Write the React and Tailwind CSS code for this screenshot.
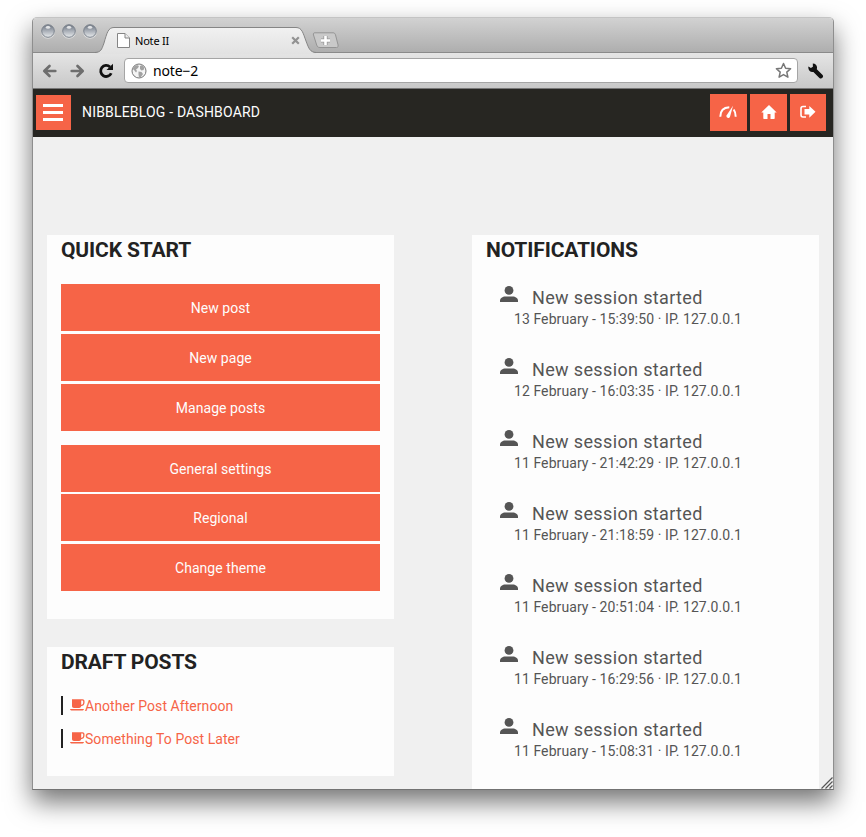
import React from "react";

const quick = ["New post", "New page", "Manage posts"];
const sessions = [
  "13 February - 15:39:50 · IP. 127.0.0.1",
  "12 February - 16:03:35 · IP. 127.0.0.1",
  "11 February - 21:42:29 · IP. 127.0.0.1",
  "11 February - 21:18:59 · IP. 127.0.0.1",
  "11 February - 20:51:04 · IP. 127.0.0.1",
  "11 February - 16:29:56 · IP. 127.0.0.1",
  "11 February - 15:08:31 · IP. 127.0.0.1",
];

function Light() {
  return (
    <svg width="14" height="16" viewBox="0 0 14 16">
      <defs>
        <linearGradient id="orb" x1="0" y1="0" x2="0" y2="1">
          <stop offset="0" stopColor="#6c7480" />
          <stop offset="0.45" stopColor="#a3a9b2" />
          <stop offset="1" stopColor="#e9ecee" />
        </linearGradient>
      </defs>
      <circle cx="7" cy="8.9" r="6.9" fill="#dedede" />
      <circle cx="7" cy="8" r="6.300" fill="url(#orb)" stroke="#7a818b" strokeWidth="1" />
      <ellipse cx="7" cy="4.300" rx="2.200" ry="1.500" fill="#fff" opacity="0.75" />
    </svg>
  );
}

function Arrow({ flip }) {
  return (
    <svg width="15" height="14" viewBox="0 0 15 14" className={flip ? "-scale-x-100" : ""}>
      <path d="M7.500 2 2.300 7l5.200 5M2.800 7h10.500" fill="none" stroke="#6e6e6e" strokeWidth="2.700" strokeLinecap="round" strokeLinejoin="round" />
    </svg>
  );
}

function Cup() {
  return (
    <svg width="15" height="12" viewBox="0 0 15 12" className="mb-[2px] shrink-0">
      <path fill="#f66447" fillRule="evenodd" d="M2 .3h10.500c1.200 0 2 .8 2 1.900v1.600c0 2-1.300 3.200-3.400 3.500C10.900 8.400 10.200 9 9.200 9H4C2.700 9 2 8.200 2 7zM11.200 1.600v4.300c1.300-.2 2-.9 2-2.100V2.500c0-.6-.3-.9-.9-.9zM0 9.900h14c-.3 1-1 1.700-2 1.700H2C1 11.600.3 10.900 0 9.900z" />
    </svg>
  );
}

function Panel({ title, className, children }) {
  return (
    <section className={`w-[347px] bg-[#fdfdfd] px-[14px] ${className}`}>
      <h2 className="h-[30px] text-[21px] leading-[30px] font-bold tracking-[-0.130px] text-[#222]">{title}</h2>
      {children}
    </section>
  );
}

function Action({ label }) {
  return (
    <button className="block h-[47px] w-full bg-[#f66447] pt-px text-center text-[14px] leading-[46px] tracking-[0.060px] text-[#fdfdfd]">
      {label}
    </button>
  );
}

export default function App() {
  return (
    <div className="h-[837px] w-[866px] overflow-hidden bg-white px-8 pt-[17px] font-['Roboto',sans-serif]">
      <div className="relative flex h-[773px] w-[802px] flex-col overflow-visible rounded-t-[5px] border border-[#8e8e8e] border-t-[#c4c4c4] border-b-[#727272] bg-[#f0f0f0] shadow-[0_12px_26px_rgba(0,0,0,0.55)]">
        <div className="flex h-[35px] shrink-0 items-start rounded-t-[4px] border-b border-[#8a8a8a] bg-linear-to-b from-[#d2d2d2] to-[#aeaeae]">
          <div className="flex gap-[7px] pt-[5px] pl-[8px]">
            <Light />
            <Light />
            <Light />
          </div>
          <div className="relative ml-[-2px] mt-[9px] h-[27px] w-[222px]">
            <svg width="222" height="27" viewBox="0 0 222 27" className="absolute inset-0">
              <defs>
                <linearGradient id="tab" x1="0" y1="0" x2="0" y2="1">
                  <stop offset="0" stopColor="#f1f1f1" />
                  <stop offset="1" stopColor="#e2e2e2" />
                </linearGradient>
              </defs>
              <path d="M0 26C6 25 6.500 23 9 16 12 6 13 .5 19 .5H201C207 .5 208 6 211 14 214 22 215 25 221 26V27H0Z" fill="url(#tab)" />
              <path d="M0 25.500C6 25 6.500 23 9 16 12 6 13 .5 19 .5H201C207 .5 208 6 211 14 214 22 215 25 221 25.500" fill="none" stroke="#858585" />
            </svg>
            <div className="relative flex h-[27px] items-center pl-[22px] pr-[17px]">
              <svg width="13" height="15" viewBox="0 0 13 15">
                <path d="M.5.5h7.500l4.500 4.500v9.500H.5z" fill="#fff" stroke="#858585" />
                <path d="M8 .5V5h4.500" fill="#eee" stroke="#858585" />
              </svg>
              <span className="ml-[5px] flex-1 font-['Noto_Sans',sans-serif] text-[11px] leading-[14px] tracking-[-0.200px] text-black">Note II</span>
              <svg width="9" height="9" viewBox="0 0 9 9">
                <path d="M1.200 1.200 7.800 7.800M7.800 1.200 1.200 7.800" stroke="#929292" strokeWidth="2.200" />
              </svg>
            </div>
          </div>
          <svg width="27" height="17" viewBox="0 0 27 17" className="mt-[14px] ml-[-5px]">
            <path d="M3 .8h18c1.500 0 2 .8 2.500 2l2.500 10c.4 1.800 0 2.700-1.500 2.700H8c-2 0-2.700-.8-3.300-2.500L1.500 3C1 1.500 1.500.8 3 .8z" fill="#c9c9c9" stroke="#949494" />
            <path d="M13.500 4v9M9 8.500h9" stroke="#999" strokeWidth="4.200" />
            <path d="M13.500 4v9M9 8.500h9" stroke="#fff" strokeWidth="2.600" />
          </svg>
        </div>
        <div className="flex h-[36px] shrink-0 items-center border-b border-[#777] bg-linear-to-b from-[#e5e5e5] to-[#c8c8c8] pl-[9px]">
          <Arrow />
          <div className="w-[13px]" />
          <Arrow flip />
          <svg width="16" height="16" viewBox="0 0 16 16" className="ml-[13px]">
            <path d="M13.200 10.200A5.500 5.500 0 1 1 12 4" fill="none" stroke="#111" strokeWidth="2.800" />
            <path d="M15 .8V7H8.500z" fill="#111" />
          </svg>
          <div className="ml-[10px] flex h-[25px] w-[674px] items-center rounded-[4px] border border-[#a5a5a5] bg-white pl-[6px] pr-[5px]">
            <svg width="16" height="16" viewBox="0 0 16 16">
              <circle cx="8" cy="8" r="7" fill="#f4f4f4" stroke="#777" />
              <path d="M3 3.500 6 2l2 1-1 2-2 1.500L6 8l-1 1.500L3 7 1.700 6zM9 3l2-1 2.500 3-1 2-2 .5L9 6zM7.500 8.500l3 .5 1.500 2-2 3-2 .5-.5-3z" fill="#a2a2a2" />
            </svg>
            <span className="ml-[6px] flex-1 font-['Noto_Sans',sans-serif] text-[14px] leading-[20px] tracking-[-0.150px] text-black">note−2</span>
            <svg width="17" height="17" viewBox="0 0 17 17">
              <path d="m8.500 1.500 2.100 4.700 5 .5-3.800 3.400 1.100 5.100-4.400-2.600-4.400 2.600 1.100-5.100L1.400 6.700l5-.5z" fill="#fff" stroke="#777" strokeWidth="1.500" strokeLinejoin="round" />
            </svg>
          </div>
          <svg width="16" height="16" viewBox="0 0 16 16" className="ml-[10px]">
            <path d="M4.800.6 4.900 3.700 2.900 4.900.4 3.500C-.2 6.800 2 9.600 5.400 9l6 6c2 1.600 4.800-.8 3.200-3L8.800 6.300C9.700 3 8 .7 4.800.6z" fill="#111" />
          </svg>
        </div>
        <header className="flex h-12 shrink-0 items-center bg-[#272622] pr-[7px] pb-[2px] pl-[3px]">
          <button className="flex h-[35px] w-[35px] flex-col items-center justify-center gap-1 bg-[#f66447]">
            <span className="mr-px h-[3px] w-5 bg-white" />
            <span className="mr-px h-[3px] w-5 bg-white" />
            <span className="mr-px h-[3px] w-5 bg-white" />
          </button>
          <h1 className="ml-[11px] flex-1 text-[14px] leading-5 tracking-[0.180px] text-[#fdfdfd]">NIBBLEBLOG - DASHBOARD</h1>
          <div className="flex gap-[3px]">
            <button className="flex h-[37px] w-[37px] items-center justify-center bg-[#f66447]">
              <svg width="18" height="14" viewBox="0 0 18 14" className="mr-px">
                <path d="M1.300 11.800C1.300 6 4.600 2.400 10.300 2.200M14.700 4.500c1.300 1.800 2 4 2 7.300" fill="none" stroke="#fff" strokeWidth="2" />
                <path d="M14 .8 11 11.800c-.8 2.200-4.200 1.200-3.500-1.200z" fill="#fff" />
              </svg>
            </button>
            <button className="flex h-[37px] w-[37px] items-center justify-center bg-[#f66447]">
              <svg width="16" height="14" viewBox="0 0 16 14">
                <path d="M8 0 .3 7.500h2V13c0 .6.300 1 1 1h3.200V9h3v5h3.200c.7 0 1-.4 1-1V7.500h2z" fill="#fff" />
              </svg>
            </button>
            <button className="flex h-[37px] w-[36px] items-center justify-center bg-[#f66447]">
              <svg width="16" height="14" viewBox="0 0 16 14" className="mr-px">
                <path d="M6 1.500H3Q1 1.500 1 3.500v6.500q0 2 2 2h3" fill="none" stroke="#fff" strokeWidth="1.600" />
                <path d="M9.300.9 15.500 6.800 9.300 12.700V9.500H4.500V4.100h4.800z" fill="#fff" />
              </svg>
            </button>
          </div>
        </header>
        <main className="flex min-h-0 flex-1 justify-between px-[14px] pt-[98px]">
          <div className="flex flex-col gap-7">
            <Panel title="QUICK START" className="h-[384px]">
              <div className="mt-[19px] flex flex-col gap-[3px]">
                {quick.map((q) => <Action key={q} label={q} />)}
              </div>
              <div className="mt-[14px] flex flex-col">
                <Action label="General settings" />
                <div className="mt-[2px] mb-[3px]">
                  <Action label="Regional" />
                </div>
                <Action label="Change theme" />
              </div>
            </Panel>
            <Panel title="DRAFT POSTS" className="h-[129px]">
              <ul className="mt-[19px] flex flex-col gap-[14px]">
                {["Another Post Afternoon", "Something To Post Later"].map((t) => (
                  <li key={t} className="flex h-[19px] items-center border-l-2 border-[#222] pl-[7px] text-[14px] leading-[19px] tracking-[0.060px] text-[#f66447]">
                    <Cup />
                    <span className="pt-[2px]">{t}</span>
                  </li>
                ))}
              </ul>
            </Panel>
          </div>
          <Panel title="NOTIFICATIONS" className="h-[554px] overflow-hidden">
            <ul className="mt-[19px] pl-[14px]">
              {sessions.map((s) => (
                <li key={s} className="h-[72px] text-[#555]">
                  <div className="flex h-[25px] items-start">
                    <svg width="18" height="17" viewBox="0 0 18 17" className="mt-[2px]">
                      <circle cx="9" cy="4.400" r="4.400" fill="#555" />
                      <path d="M0 15.900v-1.400c0-2.200 2.500-4 5.500-4h7c3 0 5.500 1.800 5.500 4v1.400z" fill="#555" />
                    </svg>
                    <span className="ml-[14px] text-[18px] leading-[27px] tracking-[0.360px]">New session started</span>
                  </div>
                  <p className="pl-[14px] text-[14px] leading-5 tracking-[0.080px]">{s}</p>
                </li>
              ))}
            </ul>
          </Panel>
        </main>
        <svg width="12" height="12" viewBox="0 0 12 12" className="absolute right-0 bottom-0">
          <path d="M.5 11.500l11-11M4.500 11.500l7-7M8.500 11.500l3-3" stroke="#555" strokeWidth="1.200" />
        </svg>
      </div>
    </div>
  );
}
